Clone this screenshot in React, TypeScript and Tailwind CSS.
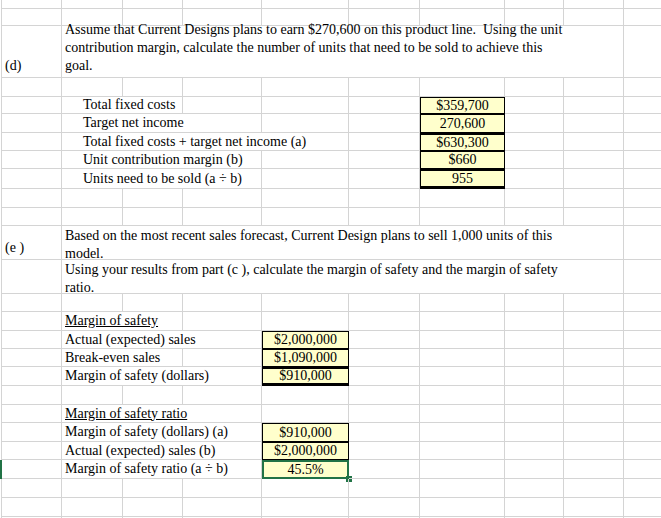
type Cell = { span?: number; text?: React.ReactNode; cls?: string };

const colW = [61, 61, 60, 79, 87, 71, 85, 59, 60, 38];
const rowH = [9, 17, 52, 19, 17, 19, 18, 18, 20, 19, 18, 34, 34, 18, 19, 18, 18, 19, 19, 18, 19, 18, 19, 19, 19, 19];

const box = "bg-[#ffffcc] border border-black justify-center";

const emptyRow: Cell[] = Array.from({ length: 10 }, () => ({}));

function labelRow(label: React.ReactNode, labelSpan: number, valueCol: number, value: string, extra = "", indent = "pl-[21px]"): Cell[] {
  const cells: Cell[] = [{}, { span: labelSpan, text: label, cls: indent }];
  let col = 1 + labelSpan;
  while (col < 10) {
    if (col === valueCol) cells.push({ text: value, cls: box + " " + extra });
    else cells.push({});
    col++;
  }
  return cells;
}

const rows: Cell[][] = [
  emptyRow,
  emptyRow,
  [
    { text: "(d)", cls: "items-end pl-[3px] pb-[2px]" },
    {
      span: 8,
      cls: "items-end pl-[3px] pb-[2px]",
      text: (
        <span>
          Assume that Current Designs plans to earn $270,600 on this product line.&nbsp; Using the unit
          <br />
          contribution margin, calculate the number of units that need to be sold to achieve this
          <br />
          goal.
        </span>
      ),
    },
    {},
  ],
  emptyRow,
  labelRow("Total fixed costs", 2, 6, "$359,700"),
  labelRow("Target net income", 3, 6, "270,600"),
  labelRow("Total fixed costs + target net income (a)", 4, 6, "$630,300", "border-t-2"),
  labelRow("Unit contribution margin (b)", 3, 6, "$660"),
  labelRow("Units need to be sold (a ÷ b)", 3, 6, "955", "border-t-2 border-b-[3px] border-b-double"),
  emptyRow,
  emptyRow,
  [
    { text: "(e )", cls: "items-end pl-[3px] pb-[2px]" },
    {
      span: 8,
      cls: "items-start pl-[3px] pt-[1px]",
      text: (
        <span>
          Based on the most recent sales forecast, Current Design plans to sell 1,000 units of this
          <br />
          model.
        </span>
      ),
    },
    {},
  ],
  [
    {},
    {
      span: 8,
      cls: "items-start pl-[3px] pt-[1px]",
      text: (
        <span>
          Using your results from part (c ), calculate the margin of safety and the margin of safety
          <br />
          ratio.
        </span>
      ),
    },
    {},
  ],
  emptyRow,
  labelRow(<span className="underline">Margin of safety</span>, 2, 10, "", "", "pl-[3px]"),
  labelRow("Actual (expected) sales", 3, 4, "$2,000,000", "", "pl-[3px]"),
  labelRow("Break-even sales", 2, 4, "$1,090,000", "", "pl-[3px]"),
  labelRow("Margin of safety (dollars)", 3, 4, "$910,000", "border-t-2 border-b-[3px] border-b-double", "pl-[3px]"),
  emptyRow,
  labelRow(<span className="underline">Margin of safety ratio</span>, 3, 10, "", "", "pl-[3px]"),
  labelRow("Margin of safety (dollars) (a)", 3, 4, "$910,000", "", "pl-[3px]"),
  labelRow("Actual (expected) sales (b)", 3, 4, "$2,000,000", "", "pl-[3px]"),
  labelRow("Margin of safety ratio (a  ÷ b)", 3, 4, "45.5%", "", "pl-[3px]"),
  emptyRow,
  emptyRow,
  emptyRow,
];

export default function App() {
  return (
    <div
      className="w-[661px] h-[518px] overflow-hidden bg-white text-black text-[14px] leading-[18px] relative"
      style={{ fontFamily: '"Liberation Serif", "Times New Roman", serif' }}
    >
      <div
        className="grid pl-px"
        style={{
          gridTemplateColumns: colW.map((w) => w + "px").join(" "),
          gridTemplateRows: rowH.map((h) => h + "px").join(" "),
        }}
      >
        {rows.map((r, ri) =>
          r.map((c, ci) => {
            const isRatio = ri === 22 && c.text === "45.5%";
            return (
              <div
                key={ri + "-" + ci}
                className={
                  "flex items-center whitespace-nowrap relative " +
                  (isRatio
                    ? "bg-[#ffffcc] border-2 border-[#217346] justify-center"
                    : "border-r border-b border-[#d4d4d4] " + (ci === 0 ? "border-l " : "") + (c.cls ?? ""))
                }
                style={{ gridColumn: c.span ? `span ${c.span}` : undefined }}
              >
                {c.text}
                {isRatio && <span className="absolute -right-[5px] -bottom-[5px] w-[6px] h-[6px] bg-[#217346]" />}
              </div>
            );
          })
        )}
      </div>
      <div className="absolute left-0 top-[460px] w-[2px] h-[19px] bg-[#217346]" />
    </div>
  );
}
